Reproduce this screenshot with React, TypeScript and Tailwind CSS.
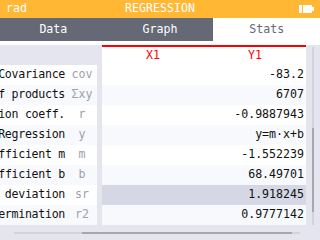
import React from "react";

interface StatRow {
  title: string;
  symbol: string;
  value: string;
}

const ROWS: StatRow[] = [
  { title: "Covariance", symbol: "cov", value: "-83.2" },
  { title: "Sum of products", symbol: "Σxy", value: "6707" },
  { title: "Correlation coeff.", symbol: "r", value: "-0.9887943" },
  { title: "Regression", symbol: "y", value: "y=m·x+b" },
  { title: "Coefficient m", symbol: "m", value: "-1.552239" },
  { title: "Coefficient b", symbol: "b", value: "68.49701" },
  { title: "Residual standard deviation", symbol: "sr", value: "1.918245" },
  { title: "Coefficient of determination", symbol: "r2", value: "0.9777142" },
];

const SELECTED = 6;

const Battery = () => (
  <svg width="16" height="10" viewBox="0 0 16 10" className="block">
    <rect x="0" y="0" width="3" height="8" fill="#fff" />
    <rect x="4" y="0" width="9" height="8" fill="#fff" />
    <rect x="13" y="2" width="2" height="4" fill="#fff" />
  </svg>
);

export default function App() {
  return (
    <div className="w-[320px] h-[240px] overflow-hidden bg-[#e4e5ee] font-['DejaVu_Sans_Mono',monospace] text-[11.6px] leading-none">
      {/* Title bar */}
      <div className="relative h-[18px] bg-[#ffb734] text-white flex items-center">
        <span className="pl-[6px]">rad</span>
        <span className="absolute inset-0 flex items-center justify-center">REGRESSION</span>
        <div className="ml-auto pr-[5px] pt-[1px]">
          <Battery />
        </div>
      </div>

      {/* Tabs */}
      <div className="flex h-[23px] bg-[#656975] text-white">
        <div className="flex-1 flex items-center justify-center">Data</div>
        <div className="flex-1 flex items-center justify-center">Graph</div>
        <div className="flex-1 flex items-center justify-center bg-white text-[#656975]">Stats</div>
      </div>
      <div className="h-[4px] bg-white" />

      {/* Table area */}
      <div className="flex h-[195px]">
        <div className="w-[306px] flex flex-col">
          {/* header row */}
          <div className="flex h-[20px]">
            <div className="w-[102px]" />
            <div className="w-[204px] bg-white border-t-2 border-[#ff0000] flex text-[#ff0000]">
              <div className="flex-1 flex items-center justify-center">X1</div>
              <div className="flex-1 flex items-center justify-center">Y1</div>
            </div>
          </div>

          {ROWS.map((row, i) => {
            const light = i % 2 === 1;
            return (
              <div key={row.symbol} className="flex h-[20px]">
                <div
                  className={`w-[97px] overflow-hidden flex items-center justify-end whitespace-nowrap ${
                    light ? "bg-[#f7f9fd]" : "bg-white"
                  }`}
                >
                  <span className="text-[#111] tracking-[-0.3px]">{row.title}</span>
                  <span className="w-[24px] ml-[5px] mr-[3px] text-center text-[#a0a0a8] shrink-0">
                    {row.symbol}
                  </span>
                </div>
                <div className="w-[5px]" />
                <div
                  className={`w-[204px] flex items-center justify-end pr-[2px] text-[#111] ${
                    i === SELECTED ? "bg-[#d5d7e5]" : light ? "bg-[#f7f9fd]" : "bg-white"
                  }`}
                >
                  {row.value}
                </div>
              </div>
            );
          })}

          {/* horizontal scrollbar */}
          <div className="flex-1 flex items-center pl-[14px] pr-[6px]">
            <div className="flex-1 h-[2px] bg-[#d2d4dc] flex">
              <div className="w-[68px]" />
              <div className="w-[210px] bg-[#a5a7ae]" />
            </div>
          </div>
        </div>

        {/* vertical scrollbar */}
        <div className="w-[14px] flex justify-center pt-[2px] pb-[15px]">
          <div className="w-[2px] bg-[#d2d4dc] flex flex-col">
            <div className="h-[81px]" />
            <div className="h-[84px] bg-[#a5a7ae]" />
          </div>
        </div>
      </div>
    </div>
  );
}
